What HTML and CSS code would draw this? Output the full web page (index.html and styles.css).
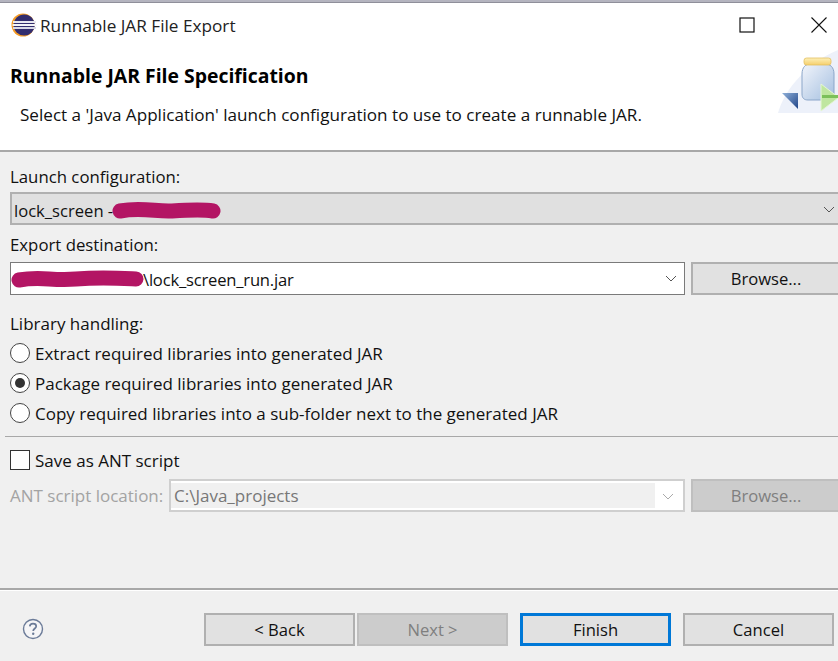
FILE: index.html
```html
<!DOCTYPE html>
<html lang="en">
<head>
<meta charset="utf-8">
<title>Runnable JAR File Export</title>
<link rel="stylesheet" href="styles.css">
</head>
<body>
<div class="window">
  <div class="topstrip"></div>
  <header class="titlebar">
    <svg class="app-icon" width="26" height="24" viewBox="0 0 26 24">
      <circle cx="12" cy="12" r="11.5" fill="#f39a25"/>
      <circle cx="13.2" cy="12" r="10.6" fill="#322d6e"/>
      <rect x="2" y="8" width="23" height="2" fill="#e8e8f0"/>
      <rect x="1.5" y="11" width="24" height="2" fill="#f4f4f8"/>
      <rect x="2" y="14" width="23" height="2" fill="#d8d8e6"/>
    </svg>
    <span class="window-title">Runnable JAR File Export</span>
    <div class="window-controls">
      <svg width="16" height="16" viewBox="0 0 16 16"><rect x="1" y="1" width="14" height="14" fill="none" stroke="#111" stroke-width="1.2"/></svg>
      <svg width="16" height="16" viewBox="0 0 16 16"><path d="M0.5 0.5L15.5 15.5M15.5 0.5L0.5 15.5" stroke="#111" stroke-width="1.1"/></svg>
    </div>
  </header>
  <section class="banner">
    <div class="banner-text">
      <h1>Runnable JAR File Specification</h1>
      <p>Select a 'Java Application' launch configuration to use to create a runnable JAR.</p>
    </div>
    <svg class="banner-icon" width="60" height="64" viewBox="0 0 60 64">
      <defs>
        <linearGradient id="jar" x1="0" y1="0" x2="1" y2="1"><stop offset="0" stop-color="#f2f5fb"/><stop offset="1" stop-color="#a4bfe0"/></linearGradient>
        <linearGradient id="lid" x1="0" y1="0" x2="0" y2="1"><stop offset="0" stop-color="#fdf0b8"/><stop offset="1" stop-color="#f5cf6c"/></linearGradient>
        <linearGradient id="arrow" x1="0" y1="0" x2="1" y2="1"><stop offset="0" stop-color="#8fb0d8"/><stop offset="1" stop-color="#1f4488"/></linearGradient>
      </defs>
      <path d="M0 63C6 40 30 12 60 0V63Z" fill="#edf1fa"/>
      <path d="M24 24C24 17 28 14 32 14H47C52 14 56 17 56 24V44C56 48 53 50 50 50H30C26 50 24 48 24 44Z" fill="url(#jar)" stroke="#8ba6c9"/>
      <rect x="26" y="8" width="27" height="7" rx="2.5" fill="url(#lid)" stroke="#e3bf60" stroke-width="0.8"/>
      <path d="M4 43H20V59Z" fill="url(#arrow)"/>
      <path d="M43 34L60 47V48L43 61Z" fill="#bfe6a0" stroke="#e4f5d4"/>
      <rect x="44" y="45" width="16" height="3" fill="#7cc05a"/>
    </svg>
  </section>
  <main class="content">
    <label class="field-label first">Launch configuration:</label>
    <div class="combo combo-readonly">
      <span class="combo-text">lock_screen -</span>
      <svg class="chevron" width="12" height="7" viewBox="0 0 12 7"><path d="M1 1L6 6L11 1" fill="none" stroke="#555"/></svg>
      <svg class="redact redact-a" width="112" height="18" viewBox="0 0 112 18"><path d="M8 9C30 5 45 10 60 9C75 8 90 7 101 9" fill="none" stroke="#b31564" stroke-width="15" stroke-linecap="round"/></svg>
    </div>
    <label class="field-label dest">Export destination:</label>
    <div class="row">
      <div class="combo combo-edit">
        <span class="path combo-text">\lock_screen_run.jar</span>
        <svg class="chevron" width="12" height="7" viewBox="0 0 12 7"><path d="M1 1L6 6L11 1" fill="none" stroke="#555"/></svg>
        <svg class="redact redact-b" width="134" height="18" viewBox="0 0 134 18"><path d="M8 10C30 6 40 11 65 9C90 7 105 8 125 9" fill="none" stroke="#b31564" stroke-width="15" stroke-linecap="round"/></svg>
      </div>
      <button class="btn btn-side">Browse...</button>
    </div>
    <div class="group-label">Library handling:</div>
    <div class="choices">
      <div class="choice"><span class="radio"></span>Extract required libraries into generated JAR</div>
      <div class="choice"><span class="radio checked"></span>Package required libraries into generated JAR</div>
      <div class="choice"><span class="radio"></span>Copy required libraries into a sub-folder next to the generated JAR</div>
    </div>
    <div class="divider"></div>
    <div class="choice check-row"><span class="checkbox"></span>Save as ANT script</div>
    <div class="row ant-row">
      <span class="ant-label">ANT script location:</span>
      <div class="combo combo-disabled">
        <span class="ant-value">C:\Java_projects</span>
        <svg class="chevron" width="12" height="7" viewBox="0 0 12 7"><path d="M1 1L6 6L11 1" fill="none" stroke="#aaa"/></svg>
      </div>
      <button class="btn btn-side btn-disabled">Browse...</button>
    </div>
  </main>
  <footer class="footer">
    <svg class="help" width="22" height="22" viewBox="0 0 22 22">
      <circle cx="11" cy="11" r="9.5" fill="#f5f5f7" stroke="#6b7b98" stroke-width="1.4"/>
      <path d="M7.8 8.4C7.9 6.6 9.2 5.7 11 5.7C12.9 5.7 14.2 6.8 14.2 8.3C14.2 10.4 11.2 10.6 11.2 13" fill="none" stroke="#6b7b98" stroke-width="1.7"/>
      <circle cx="11.2" cy="15.8" r="1.2" fill="#6b7b98"/>
    </svg>
    <div class="actions">
      <div class="nav-pair">
        <button class="btn btn-action">&lt; Back</button>
        <button class="btn btn-action btn-disabled">Next &gt;</button>
      </div>
      <button class="btn btn-action btn-default">Finish</button>
      <button class="btn btn-action">Cancel</button>
    </div>
  </footer>
</div>
</body>
</html>
```
FILE: styles.css
```css
* { box-sizing: border-box; }
html, body { margin: 0; height: 661px; overflow: hidden; }
body { font-family: "Open Sans", "Noto Sans", sans-serif; font-size: 17px; color: #111; background: #f0f0f0; }
.window { display: flex; flex-direction: column; width: 838px; height: 661px; overflow: hidden; }
.topstrip { height: 3px; background: #b4b4bf; border-bottom: 1px solid #8f8f9a; }
.titlebar { display: flex; align-items: center; height: 44px; padding-left: 11px; background: #fff; }
.app-icon { flex: none; width: 26px; height: 24px; }
.window-title { margin-left: 3px; font-size: 17.2px; color: #222; }
.window-controls { display: flex; gap: 56px; margin-left: auto; margin-right: 11px; }
.banner { display: flex; justify-content: space-between; height: 105px; background: #fff; border-bottom: 2px solid #a8a8a8; }
.banner-text { padding-left: 10px; }
.banner-text h1 { margin: 15px 0 0; font-size: 19.4px; font-weight: 700; line-height: 28px; color: #000; white-space: nowrap; }
.banner-text p { margin: 13px 0 0 10px; font-size: 17.1px; line-height: 24px; white-space: nowrap; }
.banner-icon { flex: none; margin-top: 3px; }
.content { flex: 1; padding-left: 10px; }
.field-label { display: block; line-height: 24px; }
.field-label.first { margin-top: 13px; font-size: 16.8px; }
.field-label.dest { margin-top: 8px; font-size: 16.8px; }
.combo { position: relative; display: flex; flex: none; align-items: center; height: 33px; padding-left: 2px; }
.combo-text { font-size: 16.6px; padding-top: 3px; }
.combo-readonly { margin-top: 3px; background: #e0e0e0; border: 2px solid #b0b0b0; border-right: 0; }
.combo-edit { width: 675px; background: #fff; border: 1.5px solid #7a7a7a; }
.chevron { position: absolute; right: 3px; top: 12px; }
.combo-edit .chevron { right: 7px; }
.combo-disabled .chevron { right: 9px; }
.path { margin-left: 130px; padding-top: 2px; letter-spacing: -0.2px; }
.redact { position: absolute; }
.redact-a { left: 100px; top: 8px; }
.redact-b { left: 0; top: 7px; }
.row { display: flex; gap: 6px; margin-top: 5px; }
.btn { font: inherit; font-size: 16.6px; color: #111; background: #e1e1e1; border: 2px solid #b0b0b0; padding: 0; height: 33px; }
.btn-side { width: 150px; flex: none; }
.btn-disabled { background: #cccccc; border-color: #bfbfbf; color: #7f7f7f; }
.group-label { margin-top: 17px; line-height: 24px; }
.choices { display: flex; flex-direction: column; gap: 6px; margin-top: 5px; }
.choice { display: flex; align-items: center; height: 24px; }
.radio { flex: none; width: 20px; height: 20px; margin-right: 5px; border-radius: 50%; background: #fff; border: 1.5px solid #444; display: flex; align-items: center; justify-content: center; }
.radio.checked::after { content: ""; width: 10px; height: 10px; border-radius: 50%; background: #333; }
.divider { height: 1px; margin: 11px 0 0 -5px; background: #a8a8a8; }
.check-row { margin-top: 11px; }
.checkbox { flex: none; width: 20px; height: 20px; margin-right: 5px; background: #fff; border: 1.5px solid #333; }
.ant-row { margin-top: 7px; align-items: center; }
.ant-label { color: #a3a3a3; width: 153px; white-space: nowrap; flex: none; }
.combo-disabled { width: 516px; background: #fff; border: 2px solid #cfcfcf; padding: 2px 0; }
.ant-value { display: flex; align-items: center; width: 484px; height: 100%; padding-left: 3px; background: #f0f0f0; color: #777; }
.footer { display: flex; align-items: flex-start; flex: none; height: 73px; border-top: 2px solid #a8a8a8; box-shadow: inset 0 1px 0 #fff; position: relative; }
.help { position: absolute; left: 22px; top: 28px; }
.actions { display: flex; gap: 12px; margin: 23px 4px 0 auto; }
.nav-pair { display: flex; gap: 2px; }
.btn-action { width: 151px; }
.btn-default { border: 3px solid #0078d7; }
```
